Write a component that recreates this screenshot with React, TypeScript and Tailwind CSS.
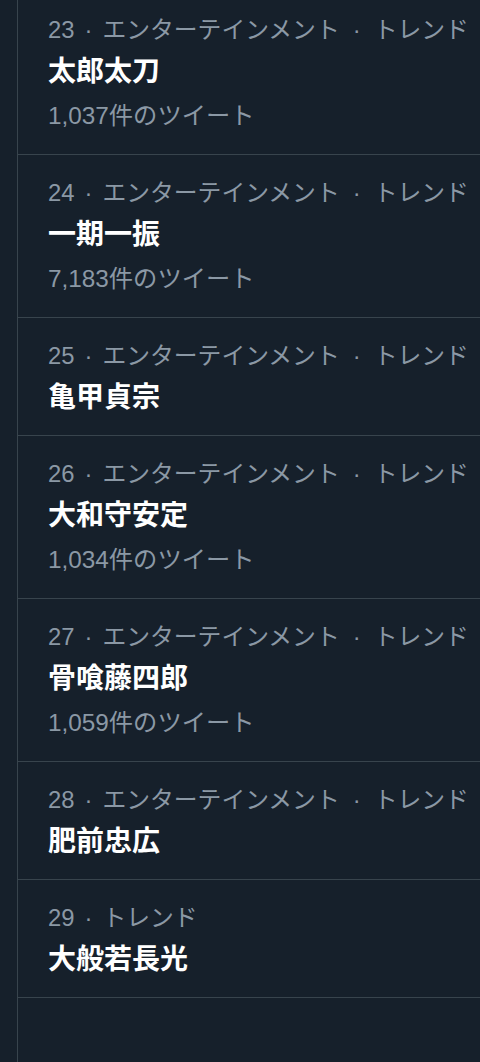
import { type FC } from "react"

interface Trend {
  rank: number
  category?: string
  name: string
  count?: string
}

const trends: Trend[] = [
  { rank: 23, category: "エンターテインメント", name: "太郎太刀", count: "1,037件のツイート" },
  { rank: 24, category: "エンターテインメント", name: "一期一振", count: "7,183件のツイート" },
  { rank: 25, category: "エンターテインメント", name: "亀甲貞宗" },
  { rank: 26, category: "エンターテインメント", name: "大和守安定", count: "1,034件のツイート" },
  { rank: 27, category: "エンターテインメント", name: "骨喰藤四郎", count: "1,059件のツイート" },
  { rank: 28, category: "エンターテインメント", name: "肥前忠広" },
  { rank: 29, name: "大般若長光" },
]

const TrendRow: FC<{ trend: Trend }> = ({ trend }) => {
  return (
    <div className="border-b border-[#38444d] pl-[30px] pt-[22px] pb-[17px]">
      <div className="whitespace-nowrap text-[23.8px] leading-[32px] text-[#8b98a5]">
        {trend.rank}
        <span className="mx-[10px]">·</span>
        {trend.category && (
          <>
            {trend.category}
            <span className="mx-[13px]">·</span>
          </>
        )}
        トレンド
      </div>
      <div className="mt-[6px] text-[28px] font-bold leading-[40px] text-white">
        {trend.name}
      </div>
      {trend.count && (
        <div className="pt-[6px] pb-[3px] text-[24.3px] leading-[36px] text-[#8b98a5]">
          {trend.count}
        </div>
      )}
    </div>
  )
}

export default function App() {
  return (
    <div
      className="h-[1062px] overflow-hidden bg-[#16202b]"
      style={{ fontFamily: '"Liberation Sans", "Noto Sans CJK JP", sans-serif' }}
    >
      <div className="ml-[17px] -mt-[8px] h-[1070px] border-l border-[#38444d]">
        {trends.map((t) => (
          <TrendRow key={t.rank} trend={t} />
        ))}
      </div>
    </div>
  )
}
